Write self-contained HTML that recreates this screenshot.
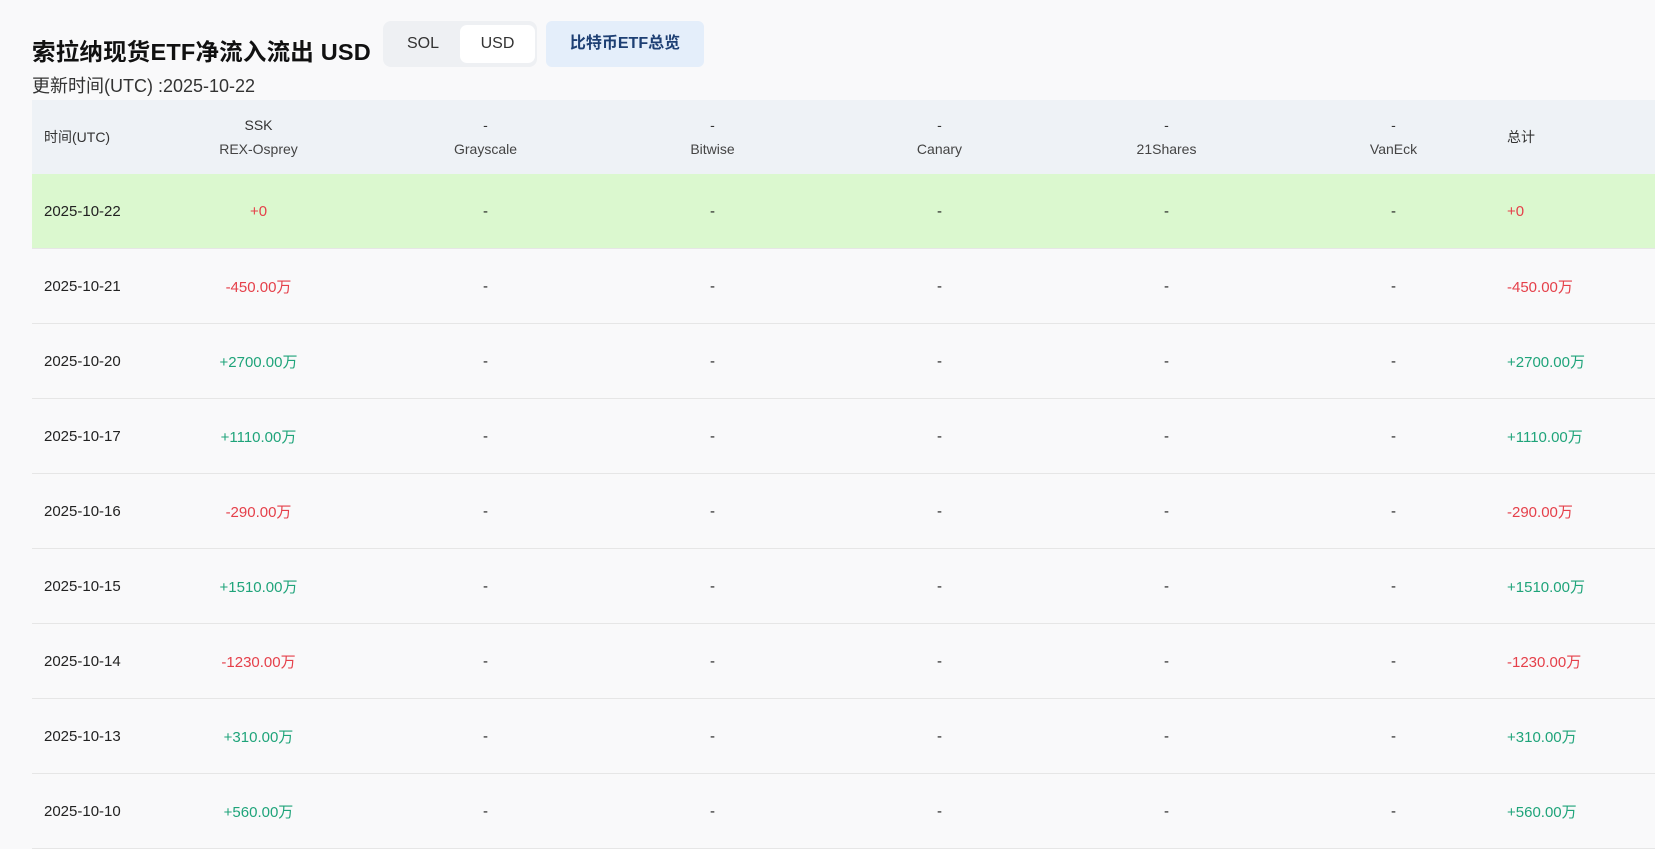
<!DOCTYPE html>
<html><head><meta charset="utf-8"><style>
*{margin:0;padding:0;box-sizing:border-box}
body{width:1655px;height:834px;overflow:hidden;background:#f9f9fa;font-family:"Liberation Sans","Noto Sans CJK SC",sans-serif;color:#222;position:relative}
.title{position:absolute;left:32px;top:33px;font-size:23.5px;font-weight:bold;color:#111;letter-spacing:0.2px}
.tog{position:absolute;left:383px;top:21px;width:154px;height:46px;background:#eef0f3;border-radius:8px}
.tog span{position:absolute;top:4px;height:38px;line-height:38px;font-size:16px;text-align:center;color:#333}
.tog .s{left:4px;width:72px}
.tog .u{left:77px;width:75px;background:#fff;border-radius:7px}
.btc{position:absolute;left:546px;top:21px;width:158px;height:46px;line-height:46px;text-align:center;background:#e4eefa;border-radius:6px;color:#1d3f73;font-weight:bold;font-size:16px}
.sub{position:absolute;left:32px;top:72px;font-size:18px;color:#333}
.tbl{position:absolute;left:32px;top:100px;width:1623px}
.row{display:flex;height:75px;align-items:center;border-bottom:1px solid #e6e6e6;font-size:15px}
.hd{height:74px;background:#eef2f6;font-size:14px;color:#333;border-bottom:none}
.g{background:#dbf8cf}
.c0{width:113px;padding-left:12px}
.c{width:227px;text-align:center}
.c7{padding-left:0}
.hd .c div{line-height:24px}
.hd .c div+div{color:#444}
.r{color:#e5404a}.gr{color:#1fa47a}
</style></head><body>
<div class="title">索拉纳现货ETF净流入流出 USD</div>
<div class="tog"><span class="s">SOL</span><span class="u">USD</span></div>
<div class="btc">比特币ETF总览</div>
<div class="sub">更新时间(UTC) :2025-10-22</div>
<div class="tbl">
<div class="row hd"><div class="c0">时间(UTC)</div><div class="c"><div>SSK</div><div>REX-Osprey</div></div><div class="c"><div>-</div><div>Grayscale</div></div><div class="c"><div>-</div><div>Bitwise</div></div><div class="c"><div>-</div><div>Canary</div></div><div class="c"><div>-</div><div>21Shares</div></div><div class="c"><div>-</div><div>VanEck</div></div><div class="c7">总计</div></div>
<div class="row g"><div class="c0">2025-10-22</div><div class="c r">+0</div><div class="c">-</div><div class="c">-</div><div class="c">-</div><div class="c">-</div><div class="c">-</div><div class="c7 r">+0</div></div>
<div class="row"><div class="c0">2025-10-21</div><div class="c r">-450.00万</div><div class="c">-</div><div class="c">-</div><div class="c">-</div><div class="c">-</div><div class="c">-</div><div class="c7 r">-450.00万</div></div>
<div class="row"><div class="c0">2025-10-20</div><div class="c gr">+2700.00万</div><div class="c">-</div><div class="c">-</div><div class="c">-</div><div class="c">-</div><div class="c">-</div><div class="c7 gr">+2700.00万</div></div>
<div class="row"><div class="c0">2025-10-17</div><div class="c gr">+1110.00万</div><div class="c">-</div><div class="c">-</div><div class="c">-</div><div class="c">-</div><div class="c">-</div><div class="c7 gr">+1110.00万</div></div>
<div class="row"><div class="c0">2025-10-16</div><div class="c r">-290.00万</div><div class="c">-</div><div class="c">-</div><div class="c">-</div><div class="c">-</div><div class="c">-</div><div class="c7 r">-290.00万</div></div>
<div class="row"><div class="c0">2025-10-15</div><div class="c gr">+1510.00万</div><div class="c">-</div><div class="c">-</div><div class="c">-</div><div class="c">-</div><div class="c">-</div><div class="c7 gr">+1510.00万</div></div>
<div class="row"><div class="c0">2025-10-14</div><div class="c r">-1230.00万</div><div class="c">-</div><div class="c">-</div><div class="c">-</div><div class="c">-</div><div class="c">-</div><div class="c7 r">-1230.00万</div></div>
<div class="row"><div class="c0">2025-10-13</div><div class="c gr">+310.00万</div><div class="c">-</div><div class="c">-</div><div class="c">-</div><div class="c">-</div><div class="c">-</div><div class="c7 gr">+310.00万</div></div>
<div class="row"><div class="c0">2025-10-10</div><div class="c gr">+560.00万</div><div class="c">-</div><div class="c">-</div><div class="c">-</div><div class="c">-</div><div class="c">-</div><div class="c7 gr">+560.00万</div></div>
</div>
</body></html>
